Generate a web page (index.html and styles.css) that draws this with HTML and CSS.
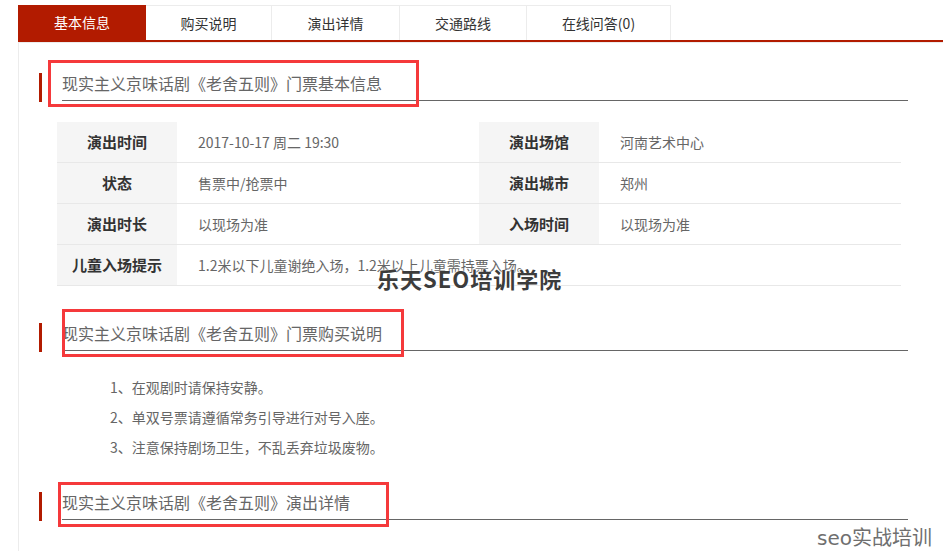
FILE: index.html
```html
<!DOCTYPE html>
<html lang="zh-CN">
<head>
<meta charset="utf-8">
<title>老舍五则 门票基本信息</title>
<link rel="stylesheet" href="styles.css">
</head>
<body>
<div class="page">
  <ul class="tabs">
    <li class="tab tab-1 active">基本信息</li>
    <li class="tab tab-2">购买说明</li>
    <li class="tab tab-3">演出详情</li>
    <li class="tab tab-4">交通路线</li>
    <li class="tab tab-5">在线问答(0)</li>
  </ul>
  <div class="content">
    <div class="sec-head">
      <span class="bar"></span>
      <h2 class="sec-title">现实主义京味话剧《老舍五则》门票基本信息</h2>
    </div>
    <div class="info">
      <div class="row">
        <div class="lab">演出时间</div>
        <div class="val">2017-10-17 周二 19:30</div>
        <div class="lab">演出场馆</div>
        <div class="val">河南艺术中心</div>
      </div>
      <div class="row">
        <div class="lab">状态</div>
        <div class="val">售票中/抢票中</div>
        <div class="lab">演出城市</div>
        <div class="val">郑州</div>
      </div>
      <div class="row">
        <div class="lab">演出时长</div>
        <div class="val">以现场为准</div>
        <div class="lab">入场时间</div>
        <div class="val">以现场为准</div>
      </div>
      <div class="row row-wide">
        <div class="lab">儿童入场提示</div>
        <div class="val">1.2米以下儿童谢绝入场，1.2米以上儿童需持票入场。</div>
      </div>
    </div>

    <div class="sec-head sec-2">
      <span class="bar"></span>
      <h2 class="sec-title">现实主义京味话剧《老舍五则》门票购买说明</h2>
    </div>
    <ol class="notes">
      <li>1、在观剧时请保持安静。</li>
      <li>2、单双号票请遵循常务引导进行对号入座。</li>
      <li>3、注意保持剧场卫生，不乱丢弃垃圾废物。</li>
    </ol>

    <div class="sec-head sec-3">
      <span class="bar"></span>
      <h2 class="sec-title">现实主义京味话剧《老舍五则》演出详情</h2>
    </div>
  </div>

  <div class="mark mark-1"></div>
  <div class="mark mark-2"></div>
  <div class="mark mark-3"></div>
  <div class="watermark">乐天SEO培训学院</div>
  <div class="corner">seo实战培训</div>
</div>
</body>
</html>
```
FILE: styles.css
```css
* { box-sizing: border-box; }
html, body { margin: 0; padding: 0; background: #fff; }
body {
  font-family: "Noto Sans CJK SC", "Noto Sans", sans-serif;
  color: #333;
  width: 943px;
  height: 551px;
  overflow: hidden;
}
.page {
  position: relative;
  padding-left: 18px;
  padding-top: 5px;
  height: 551px;
}

/* tabs */
.tabs {
  list-style: none;
  margin: 0;
  padding: 0;
  display: flex;
  height: 37px;
  border-bottom: 2px solid #b21b00;
}
.tab {
  height: 35px;
  line-height: 34px;
  text-align: center;
  font-size: 14px;
  color: #333;
  border-top: 1px solid #ececec;
  border-right: 1px solid #ececec;
  background: #fff;
}
.tab.active {
  background: #b21b00;
  color: #fff;
  border: none;
  line-height: 35px;
}
.tab-1 { width: 128px; }
.tab-2 { width: 126px; }
.tab-3 { width: 128px; }
.tab-4 { width: 127px; }
.tab-5 { width: 144px; }

/* content */
.content {
  border-top: 1px solid #ececec;
  border-left: 1px solid #ececec;
  padding: 30px 35px 0 20px;
  height: 520px;
}
.sec-head {
  display: flex;
  align-items: flex-start;
  height: 29px;
}
.bar {
  width: 3px;
  height: 29px;
  background: #b21b00;
  flex: none;
}
.sec-title {
  flex: 1;
  margin: 0 0 0 20px;
  font-size: 16px;
  font-weight: normal;
  color: #666;
  line-height: 20px;
  padding-bottom: 7px;
  border-bottom: 1px solid #666;
}
.sec-2 { margin-top: 37px; }
.sec-3 { margin-top: 30px; }

/* info table */
.info {
  margin: 20px 0 0 18px;
  width: 844px;
}
.row {
  display: grid;
  grid-template-columns: 120px 302px 120px 302px;
  height: 41px;
  border-bottom: 1px solid #e8e8e8;
}
.row-wide { grid-template-columns: 120px 1fr; }
.lab {
  background: #f5f5f5;
  text-align: center;
  font-size: 15px;
  font-weight: bold;
  color: #333;
  line-height: 40px;
}
.val {
  padding-left: 21px;
  font-size: 14px;
  color: #666;
  line-height: 40px;
  white-space: nowrap;
}

/* notes */
.notes {
  list-style: none;
  margin: 20px 0 0 71px;
  padding: 0;
}
.notes li {
  font-size: 14px;
  color: #666;
  line-height: 30px;
}

/* annotation marks */
.mark {
  position: absolute;
  border: 3px solid #f5393b;
}
.mark-1 { left: 48px; top: 60px; width: 371px; height: 47px; }
.mark-2 { left: 62px; top: 309px; width: 342px; height: 48px; }
.mark-3 { left: 58px; top: 482px; width: 331px; height: 45px; }

.watermark {
  position: absolute;
  left: 377px;
  top: 266px;
  font-size: 22px;
  line-height: 24px;
  font-weight: bold;
  color: #3c3c3c;
  letter-spacing: 1px;
  text-shadow: 0 0 2px #fff, 0 0 2px #fff;
}
.corner {
  position: absolute;
  left: 817px;
  top: 527px;
  font-size: 20px;
  line-height: 22px;
  color: #6f6f6f;
  font-family: "DejaVu Sans", "Noto Sans CJK SC", sans-serif;
}
```
